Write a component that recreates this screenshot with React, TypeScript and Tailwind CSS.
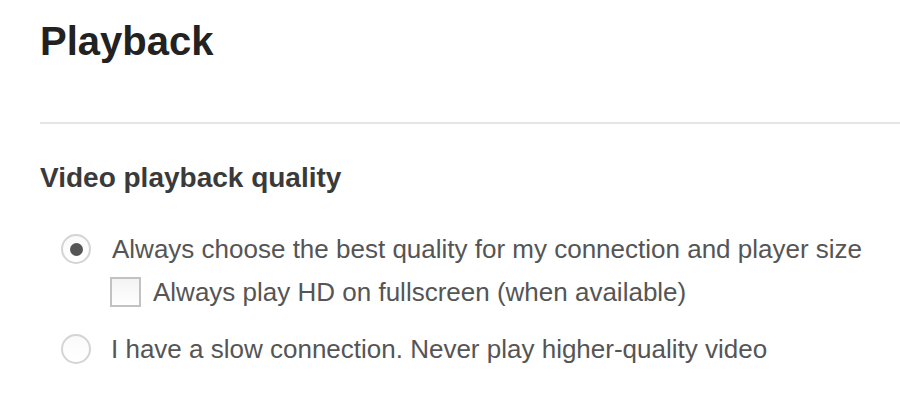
const Radio = ({ checked }: { checked?: boolean }) => (
  <span className="ml-[21px] flex h-[30px] w-[30px] shrink-0 items-center justify-center rounded-full border-2 border-[#d4d4d4] bg-gradient-to-b from-[#fafafa] to-white">
    {checked && <span className="h-[13px] w-[13px] rounded-full bg-[#555]" />}
  </span>
);

const Checkbox = () => (
  <span className="ml-[70px] h-[30px] w-[31px] shrink-0 border-2 border-[#c2c2c2] bg-gradient-to-b from-[#f3f3f3] to-white" />
);

export default function App() {
  return (
    <div
      className="h-[410px] w-[900px] overflow-hidden bg-white pl-[40px]"
      style={{ fontFamily: '"Liberation Sans", Arial, sans-serif' }}
    >
      <h1 className="pt-[21px] text-[40px] font-bold leading-[40px] text-[#222]">Playback</h1>

      <div className="mt-[61px] h-[2px] bg-[#e6e6e6]" />

      <h2 className="mt-[40px] text-[28px] font-bold leading-[28px] text-[#3a3a3a]">
        Video playback quality
      </h2>

      <div className="text-[26px] leading-[30px] text-[#555]">
        <label className="mt-[42px] flex items-center gap-[21px]">
          <Radio checked />
          <span>Always choose the best quality for my connection and player size</span>
        </label>
        <label className="mt-[13px] flex items-center gap-[12px]">
          <Checkbox />
          <span>Always play HD on fullscreen (when available)</span>
        </label>
        <label className="mt-[27px] flex items-center gap-[20px]">
          <Radio />
          <span>I have a slow connection. Never play higher-quality video</span>
        </label>
      </div>
    </div>
  );
}
